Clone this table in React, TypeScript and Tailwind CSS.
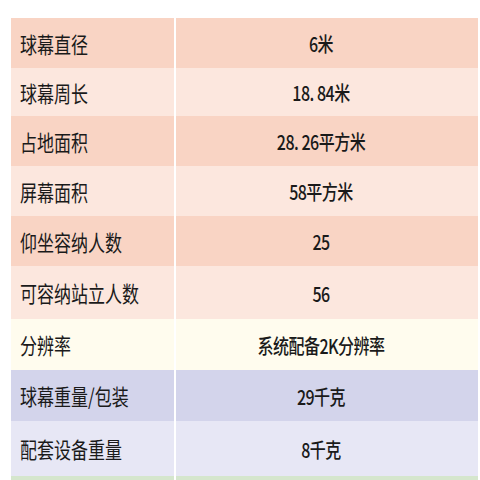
import React from "react";

type Row = { label: string; value: string; bg: string; h: string };

const rows: Row[] = [
  { label: "球幕直径", value: "6米", bg: "bg-[#f9d4c4]", h: "h-[50px]" },
  { label: "球幕周长", value: "18. 84米", bg: "bg-[#fce7de]", h: "h-[48px]" },
  { label: "占地面积", value: "28. 26平方米", bg: "bg-[#f9d4c4]", h: "h-[50px]" },
  { label: "屏幕面积", value: "58平方米", bg: "bg-[#fce7de]", h: "h-[50px]" },
  { label: "仰坐容纳人数", value: "25", bg: "bg-[#f9d4c4]", h: "h-[50px]" },
  { label: "可容纳站立人数", value: "56", bg: "bg-[#fce7de]", h: "h-[53px]" },
  { label: "分辨率", value: "系统配备2K分辨率", bg: "bg-[#fffcee]", h: "h-[51px]" },
  { label: "球幕重量/包装", value: "29千克", bg: "bg-[#d3d4eb]", h: "h-[51px]" },
  { label: "配套设备重量", value: "8千克", bg: "bg-[#e7e7f5]", h: "h-[55px]" },
];

export default function App() {
  return (
    <div className="w-[480px] h-[480px] overflow-hidden bg-white pt-[18px] pl-[11px] pr-[2px] text-[#1a1a1a]">
      <div className="grid grid-cols-[163px_1fr] gap-x-[2px]">
        {rows.map((r) => (
          <React.Fragment key={r.label}>
            <div
              className={`${r.bg} ${r.h} flex items-center pl-[9px] text-[17px] font-['Noto_Sans_CJK_SC',sans-serif]`}
            >
              <span className="inline-block scale-y-[1.3] origin-center leading-none">{r.label}</span>
            </div>
            <div
              className={`${r.bg} ${r.h} flex items-center justify-center pr-[12px] text-[16px] font-medium font-['Noto_Sans_CJK_SC',sans-serif]`}
            >
              <span className="inline-block scale-y-[1.25] origin-center leading-none tracking-[-0.5px] whitespace-pre">
                {r.value}
              </span>
            </div>
          </React.Fragment>
        ))}
        <div className="bg-[#d5e6cd] h-[20px]" />
        <div className="bg-[#d5e6cd] h-[20px]" />
      </div>
    </div>
  );
}
